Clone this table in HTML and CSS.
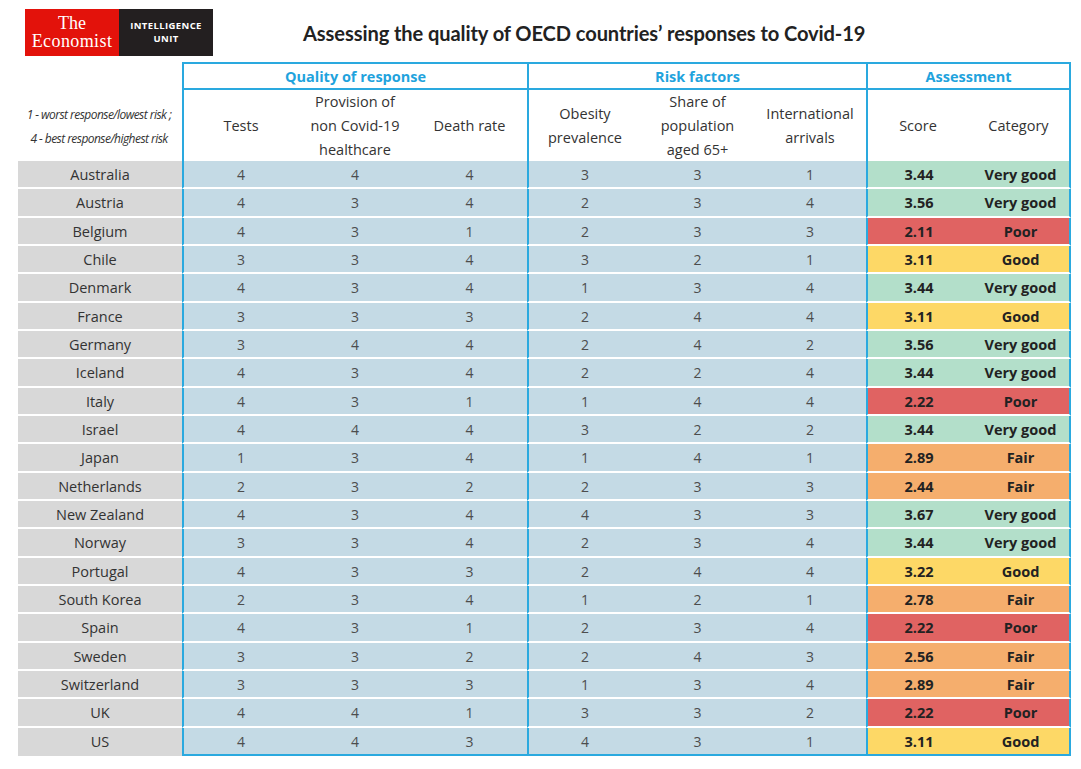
FILE: index.html
```html
<!DOCTYPE html>
<html>
<head>
<meta charset="utf-8">
<link rel="stylesheet" href="styles.css">
</head>
<body>
<div class="page">
  <header class="top">
    <div class="logo">
      <div class="logo-red"><span class="lr1">The</span><span class="lr2">Economist</span></div>
      <div class="logo-black">INTELLIGENCE<br>UNIT</div>
    </div>
    <h1 class="title">Assessing the quality of OECD countries’ responses to Covid-19</h1>
  </header>

  <div class="table">
    <div class="row head1">
      <div class="lab"></div>
      <div class="grp grp-q">Quality of response</div>
      <div class="grp grp-r">Risk factors</div>
      <div class="grp grp-a">Assessment</div>
    </div>
    <div class="row head2">
      <div class="lab legend"><span>1 - worst response/lowest risk ;</span><span>4 - best response/highest risk</span></div>
      <div class="h b">Tests</div>
      <div class="h">Provision of<br>non Covid-19<br>healthcare</div>
      <div class="h">Death rate</div>
      <div class="h b">Obesity<br>prevalence</div>
      <div class="h">Share of<br>population<br>aged 65+</div>
      <div class="h">International<br>arrivals</div>
      <div class="h b">Score</div>
      <div class="h e">Category</div>
    </div>

    <div class="row data g"><div class="lab">Australia</div><div class="n b">4</div><div class="n">4</div><div class="n">4</div><div class="n b">3</div><div class="n">3</div><div class="n">1</div><div class="sc b">3.44</div><div class="cat e">Very good</div></div>
    <div class="row data g"><div class="lab">Austria</div><div class="n b">4</div><div class="n">3</div><div class="n">4</div><div class="n b">2</div><div class="n">3</div><div class="n">4</div><div class="sc b">3.56</div><div class="cat e">Very good</div></div>
    <div class="row data r"><div class="lab">Belgium</div><div class="n b">4</div><div class="n">3</div><div class="n">1</div><div class="n b">2</div><div class="n">3</div><div class="n">3</div><div class="sc b">2.11</div><div class="cat e">Poor</div></div>
    <div class="row data y"><div class="lab">Chile</div><div class="n b">3</div><div class="n">3</div><div class="n">4</div><div class="n b">3</div><div class="n">2</div><div class="n">1</div><div class="sc b">3.11</div><div class="cat e">Good</div></div>
    <div class="row data g"><div class="lab">Denmark</div><div class="n b">4</div><div class="n">3</div><div class="n">4</div><div class="n b">1</div><div class="n">3</div><div class="n">4</div><div class="sc b">3.44</div><div class="cat e">Very good</div></div>
    <div class="row data y"><div class="lab">France</div><div class="n b">3</div><div class="n">3</div><div class="n">3</div><div class="n b">2</div><div class="n">4</div><div class="n">4</div><div class="sc b">3.11</div><div class="cat e">Good</div></div>
    <div class="row data g"><div class="lab">Germany</div><div class="n b">3</div><div class="n">4</div><div class="n">4</div><div class="n b">2</div><div class="n">4</div><div class="n">2</div><div class="sc b">3.56</div><div class="cat e">Very good</div></div>
    <div class="row data g"><div class="lab">Iceland</div><div class="n b">4</div><div class="n">3</div><div class="n">4</div><div class="n b">2</div><div class="n">2</div><div class="n">4</div><div class="sc b">3.44</div><div class="cat e">Very good</div></div>
    <div class="row data r"><div class="lab">Italy</div><div class="n b">4</div><div class="n">3</div><div class="n">1</div><div class="n b">1</div><div class="n">4</div><div class="n">4</div><div class="sc b">2.22</div><div class="cat e">Poor</div></div>
    <div class="row data g"><div class="lab">Israel</div><div class="n b">4</div><div class="n">4</div><div class="n">4</div><div class="n b">3</div><div class="n">2</div><div class="n">2</div><div class="sc b">3.44</div><div class="cat e">Very good</div></div>
    <div class="row data o"><div class="lab">Japan</div><div class="n b">1</div><div class="n">3</div><div class="n">4</div><div class="n b">1</div><div class="n">4</div><div class="n">1</div><div class="sc b">2.89</div><div class="cat e">Fair</div></div>
    <div class="row data o"><div class="lab">Netherlands</div><div class="n b">2</div><div class="n">3</div><div class="n">2</div><div class="n b">2</div><div class="n">3</div><div class="n">3</div><div class="sc b">2.44</div><div class="cat e">Fair</div></div>
    <div class="row data g"><div class="lab">New Zealand</div><div class="n b">4</div><div class="n">3</div><div class="n">4</div><div class="n b">4</div><div class="n">3</div><div class="n">3</div><div class="sc b">3.67</div><div class="cat e">Very good</div></div>
    <div class="row data g"><div class="lab">Norway</div><div class="n b">3</div><div class="n">3</div><div class="n">4</div><div class="n b">2</div><div class="n">3</div><div class="n">4</div><div class="sc b">3.44</div><div class="cat e">Very good</div></div>
    <div class="row data y"><div class="lab">Portugal</div><div class="n b">4</div><div class="n">3</div><div class="n">3</div><div class="n b">2</div><div class="n">4</div><div class="n">4</div><div class="sc b">3.22</div><div class="cat e">Good</div></div>
    <div class="row data o"><div class="lab">South Korea</div><div class="n b">2</div><div class="n">3</div><div class="n">4</div><div class="n b">1</div><div class="n">2</div><div class="n">1</div><div class="sc b">2.78</div><div class="cat e">Fair</div></div>
    <div class="row data r"><div class="lab">Spain</div><div class="n b">4</div><div class="n">3</div><div class="n">1</div><div class="n b">2</div><div class="n">3</div><div class="n">4</div><div class="sc b">2.22</div><div class="cat e">Poor</div></div>
    <div class="row data o"><div class="lab">Sweden</div><div class="n b">3</div><div class="n">3</div><div class="n">2</div><div class="n b">2</div><div class="n">4</div><div class="n">3</div><div class="sc b">2.56</div><div class="cat e">Fair</div></div>
    <div class="row data o"><div class="lab">Switzerland</div><div class="n b">3</div><div class="n">3</div><div class="n">3</div><div class="n b">1</div><div class="n">3</div><div class="n">4</div><div class="sc b">2.89</div><div class="cat e">Fair</div></div>
    <div class="row data r"><div class="lab">UK</div><div class="n b">4</div><div class="n">4</div><div class="n">1</div><div class="n b">3</div><div class="n">3</div><div class="n">2</div><div class="sc b">2.22</div><div class="cat e">Poor</div></div>
    <div class="row data y last"><div class="lab">US</div><div class="n b">4</div><div class="n">4</div><div class="n">3</div><div class="n b">4</div><div class="n">3</div><div class="n">1</div><div class="sc b">3.11</div><div class="cat e">Good</div></div>
  </div>
</div>
</body>
</html>
```

FILE: styles.css
```css
* { box-sizing: border-box; }
html, body { margin: 0; padding: 0; background: #fff; }
body { font-family: "Open Sans", "Liberation Sans", sans-serif; color: #333; }

.page { width: 1081px; height: 769px; overflow: hidden; }

.top {
  display: flex;
  align-items: center;
  height: 56px;
  padding-top: 9px;
  padding-left: 25px;
}
.logo { display: flex; height: 47px; }
.logo-red {
  width: 94px;
  background: #e3120b;
  color: #fff;
  font-family: "Liberation Serif", "DejaVu Serif", serif;
  font-size: 18px;
  line-height: 18px;
  text-align: center;
  padding-top: 5px;
  display: flex;
  flex-direction: column;
  align-items: center;
}
.lr2 { letter-spacing: 0.4px; }
.logo-black {
  width: 94px;
  background: #231f20;
  color: #fff;
  font-family: "Open Sans", sans-serif;
  font-weight: 700;
  font-size: 9.5px;
  line-height: 13px;
  text-align: center;
  padding-top: 10px;
  letter-spacing: 0.4px;
}
.title {
  margin: 0 0 0 90px;
  font-family: Lato, "Open Sans", sans-serif;
  font-weight: 700;
  font-size: 20.1px;
  color: #222;
  letter-spacing: -0.1px;
  padding-top: 1px;
}

.table { margin-left: 18px; margin-top: 6px; width: 1053px; }

.row {
  display: grid;
  grid-template-columns: 164px 116px 114px 115px 114px 113px 112px 102px 103px;
}

.head1 { height: 28px; }
.grp {
  border-top: 2px solid #2aa9df;
  border-bottom: 2px solid #2aa9df;
  border-left: 2px solid #2aa9df;
  color: #1fa3dd;
  font-weight: 700;
  font-size: 14.5px;
  display: flex;
  align-items: center;
  justify-content: center;
}
.grp-q { grid-column: span 3; }
.grp-r { grid-column: span 3; }
.grp-a { grid-column: span 2; border-right: 2px solid #2aa9df; }

.head2 { height: 71px; }
.h {
  display: flex;
  align-items: center;
  justify-content: center;
  text-align: center;
  font-size: 14.5px;
  line-height: 24px;
  color: #333;
}
.legend {
  display: flex;
  flex-direction: column;
  justify-content: center;
  align-items: center;
  font-style: italic;
  font-size: 12px;
  letter-spacing: -0.55px;
  color: #333;
  gap: 7px;
  padding-right: 2px;
  padding-top: 1px;
}

.b { border-left: 2px solid #2aa9df; }
.e { border-right: 2px solid #2aa9df; }

.data { height: 28.333px; }
.data > div {
  border-bottom: 2px solid #fff;
  display: flex;
  align-items: center;
  justify-content: center;
  font-size: 14px;
  padding-top: 1px;
}
.data .lab { background: #d8d8d8; color: #333; font-size: 14.5px; }
.data .n { background: #c4dae5; color: #4d4d4d; }
.data .sc, .data .cat { font-weight: 700; color: #222; font-size: 14.5px; }
.data .sc { padding-left: 2px; }
.data .cat { padding-left: 4px; }

.g .sc, .g .cat { background: #b3dfca; }
.r .sc, .r .cat { background: #e06362; }
.y .sc, .y .cat { background: #fdd866; }
.o .sc, .o .cat { background: #f5ae6d; }

.last > div { border-bottom-color: #2aa9df; }
.last > .lab { border-bottom-color: transparent; }
```
